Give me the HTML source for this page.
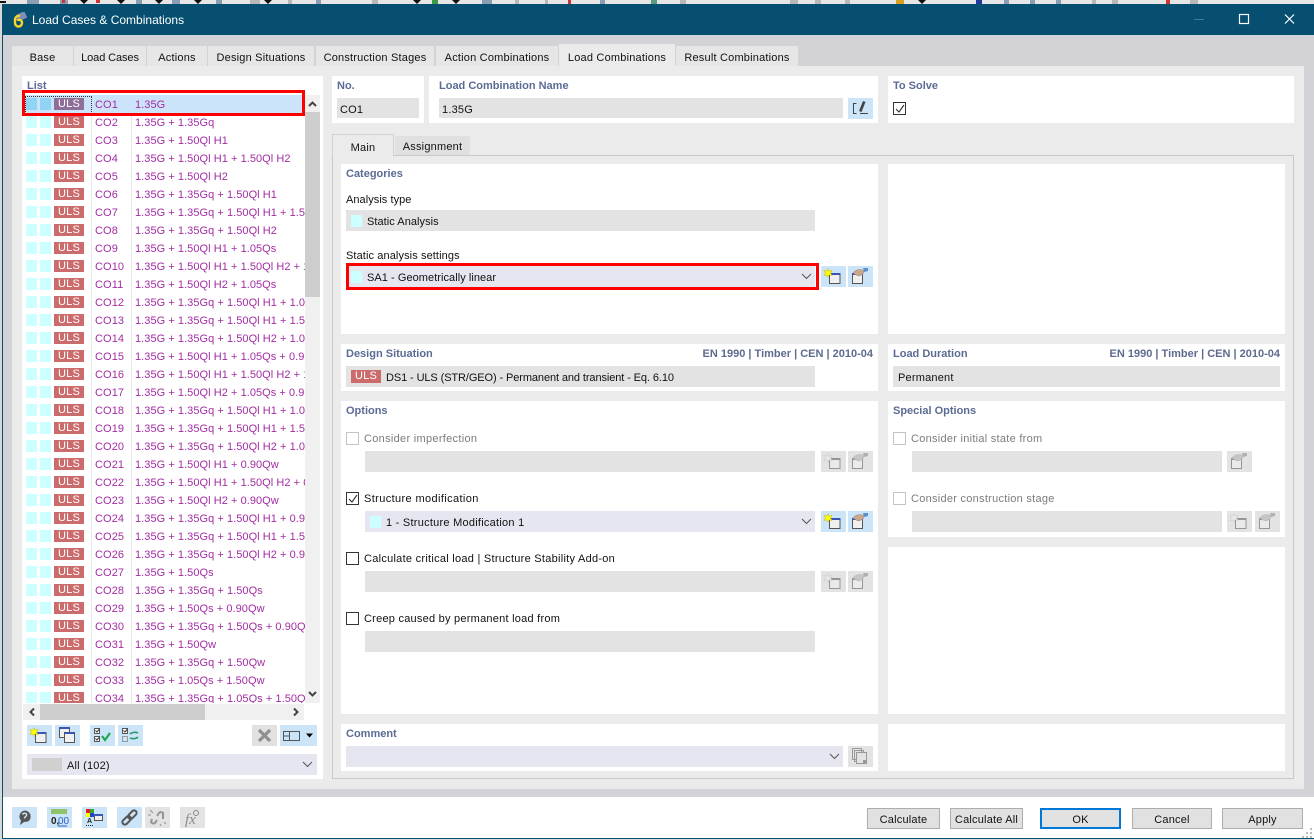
<!DOCTYPE html>
<html><head><meta charset="utf-8">
<style>
html,body{margin:0;padding:0}
body{width:1314px;height:840px;overflow:hidden;position:relative;background:#d8d8d8;font-family:"Liberation Sans",sans-serif;font-size:11px;letter-spacing:.2px;color:#111}
div,span,i,b,em{position:absolute;display:block;font-style:normal;white-space:nowrap}
.w{background:#fff}
.t{color:#5b6b94;font-weight:bold;font-size:11px;letter-spacing:0;margin-top:1px}
.f{background:#e3e3e3;height:21px}
.d{background:#e6e6f0;height:21px}
.l{line-height:16px;margin-top:1px}
.g{color:#7c7c7c}
.tab{top:46px;height:20px;line-height:24px;text-align:center;background:#e6e6e6}
.b{width:25px;height:21px;background:#cce4f7}
.x{background:#e3e3e3}
.b svg{position:absolute;left:0;top:0;width:25px;height:21px}
.x svg{filter:grayscale(1) opacity(.55)}
.cb{width:11px;height:11px;border:1px solid #333;background:#fff;margin-top:1px}
.cb.o{border-color:#c4c4c4}
.cb svg{position:absolute;left:0;top:0}
.chev{width:12px;height:7px}
.r{position:relative;height:18px;width:282px;color:#a32ca3}
.r i{top:3px;width:11px;height:12px;background:#ccffff}
.r i.a{left:4px}.r i.c{left:18px}
.r b{left:32px;top:3px;width:30px;height:12px;line-height:12px;background:#cc6b6b;color:#fff;text-align:center;font-weight:normal}
.r span{left:73px;top:2px;line-height:17px;letter-spacing:.1px}
.r em{left:113px;top:2px;line-height:17px;letter-spacing:.05px}
.btn{top:808px;height:19px;line-height:23px;background:#e1e1e1;border:1px solid #adadad;text-align:center;color:#111}
.red{border:3px solid #f00;box-sizing:border-box}
.sw{background:#ccffff;width:11px;height:12px}
.ul{background:#cc6b6b;color:#fff;text-align:center;line-height:13px;height:13px;width:30px}
</style></head>
<body>
<svg width="0" height="0" style="position:absolute"><defs>
<g id="win"><rect x="8.500" y="7.500" width="10.500" height="10" fill="#f0f0f0" stroke="#555"/><rect x="9" y="7" width="10" height="2" fill="#3a55b8"/></g>
<g id="star"><path d="M7 2.500l1.200 2.700 3-.7-1.800 2.500 1.800 2.500-3-.7L7 11.500 5.800 8.800l-3 .7 1.800-2.500-1.800-2.500 3 .7z" fill="#ff0" stroke="#c8b400" stroke-width=".5"/></g>
<g id="new"><use href="#win"/><use href="#star"/></g>
<g id="hand"><rect x="4.500" y="7.500" width="10" height="10" fill="#f0f0f0" stroke="#555"/><rect x="4" y="7" width="11" height="2" fill="#3a55b8"/><path d="M5 7c2-3 6-4 9-3l2 1-1 3-4 2-3-1z" fill="#c9a88e" stroke="#9a7b65" stroke-width=".5"/><path d="M15 2l5 0 0 3-4 1z" fill="#5b8fd0"/></g>
<g id="chk"><rect x="0.500" y="0.500" width="5" height="5" fill="#fff" stroke="#555"/><path d="M1.500 2.500l1.500 1.500 2.500-3" fill="none" stroke="#333"/></g>
</defs></svg>

<!-- background toolbar strip -->
<div style="left:0;top:0;width:1314px;height:4px;background:#e6e6e6"></div>
<svg style="position:absolute;left:0;top:0" width="1314" height="4">
<rect x="0" y="1" width="6" height="2" fill="#111"/>
<g fill="#8a9fb4"><rect x="27" width="12" height="4"/><rect x="60" width="8" height="4"/><rect x="136" width="6" height="4"/><rect x="172" width="8" height="4"/><rect x="216" width="6" height="4"/><rect x="316" width="5" height="4"/><rect x="482" width="10" height="4"/><rect x="600" width="5" height="4"/><rect x="1004" width="5" height="4"/><rect x="1030" width="5" height="4"/><rect x="1056" width="5" height="4"/></g>
<g fill="#b8b8b8"><rect x="250" width="10" height="4"/><rect x="288" width="4" height="4"/><rect x="372" width="6" height="4"/><rect x="515" width="4" height="4"/><rect x="545" width="3" height="4"/><rect x="680" width="6" height="4"/><rect x="790" width="8" height="4"/><rect x="815" width="6" height="4"/><rect x="845" width="5" height="4"/><rect x="1092" width="4" height="4"/><rect x="1112" width="6" height="4"/><rect x="1190" width="8" height="4"/></g>
<g fill="#c33"><rect x="62" width="3" height="3"/><rect x="96" width="4" height="3"/><rect x="568" width="3" height="4"/><rect x="1166" width="4" height="4"/></g>
<rect x="432" width="6" height="4" fill="#3a9a4a"/><rect x="651" width="6" height="4" fill="#5a9a80"/>
<rect x="896" width="8" height="4" fill="#d6a020"/><rect x="976" width="6" height="4" fill="#223a9a"/>
<g fill="#111"><path d="M80 0h8l-4 4zM117 0h8l-4 4zM155 0h8l-4 4zM194 0h8l-4 4zM264 0h8l-4 4zM413 0h8l-4 4zM452 0h8l-4 4zM918 0h8l-4 4z"/></g>
</svg>

<!-- window -->
<div style="left:2px;top:4px;width:1312px;height:834px;background:#fff"></div>
<div style="left:2px;top:4px;width:1312px;height:31px;background:#064f70"></div>
<div style="left:2px;top:4px;width:1px;height:834px;background:#064f70"></div>
<div style="left:2px;top:838px;width:1312px;height:1px;background:#064f70"></div>
<div style="left:3px;top:35px;width:1311px;height:762px;background:#d3d2d7"></div>
<svg style="position:absolute;left:11px;top:12px" width="16" height="16"><rect x="6" y="1" width="9" height="7" fill="#7d8fb5" transform="rotate(-25 10 4)"/><path d="M9 4a4 4 0 0 0-5 4v3a3.500 3.500 0 0 0 7 0 3 3 0 0 0-5-2.500" fill="none" stroke="#f4d32a" stroke-width="2.400"/></svg>
<span style="left:32px;top:12px;line-height:17px;color:#fff;font-size:12px;letter-spacing:0">Load Cases &amp; Combinations</span>
<svg style="position:absolute;left:1190px;top:12px" width="110" height="16"><path d="M4 7.500h10" stroke="#3d7d98"/><rect x="49.500" y="2.500" width="9" height="9" fill="none" stroke="#fff" stroke-width="1.200"/><path d="M95 2.500l9 9M104 2.500l-9 9" stroke="#fff" stroke-width="1.200"/></svg>

<!-- tabs -->
<div style="left:12px;top:66px;width:1292px;height:723px;background:#ebebeb"></div>
<div class="tab" style="left:12px;width:61px">Base</div>
<div class="tab" style="left:74px;width:72px;letter-spacing:-.1px">Load Cases</div>
<div class="tab" style="left:147px;width:60px">Actions</div>
<div class="tab" style="left:208px;width:106px">Design Situations</div>
<div class="tab" style="left:316px;width:118px">Construction Stages</div>
<div class="tab" style="left:436px;width:122px">Action Combinations</div>
<div class="tab" style="left:559px;top:44px;width:116px;height:22px;line-height:28px;background:#ebebeb">Load Combinations</div>
<div class="tab" style="left:676px;width:122px">Result Combinations</div>

<!-- list panel -->
<div class="w" style="left:22px;top:76px;width:301px;height:703px"></div>
<span class="t" style="left:27px;top:77px;line-height:16px">List</span>
<div style="left:22px;top:95px;width:283px;height:608px;overflow:hidden;background:#fff">
<div style="left:69px;top:0;width:1px;height:608px;background:#e8e8e8"></div>
<div style="left:109px;top:0;width:1px;height:608px;background:#e8e8e8"></div>
<div style="left:0;top:0;width:283px">
<div class="r" style="background:#cce4fa;height:18px"><i class="a" style="background:#8fd4f4"></i><i class="c" style="background:#8fd4f4"></i><b style="background:#8f6f97">ULS</b><span>CO1</span><em>1.35G</em></div>
<div class="r"><i class="a"></i><i class="c"></i><b>ULS</b><span>CO2</span><em>1.35G + 1.35Gq</em></div>
<div class="r"><i class="a"></i><i class="c"></i><b>ULS</b><span>CO3</span><em>1.35G + 1.50Ql H1</em></div>
<div class="r"><i class="a"></i><i class="c"></i><b>ULS</b><span>CO4</span><em>1.35G + 1.50Ql H1 + 1.50Ql H2</em></div>
<div class="r"><i class="a"></i><i class="c"></i><b>ULS</b><span>CO5</span><em>1.35G + 1.50Ql H2</em></div>
<div class="r"><i class="a"></i><i class="c"></i><b>ULS</b><span>CO6</span><em>1.35G + 1.35Gq + 1.50Ql H1</em></div>
<div class="r"><i class="a"></i><i class="c"></i><b>ULS</b><span>CO7</span><em>1.35G + 1.35Gq + 1.50Ql H1 + 1.50Ql H2</em></div>
<div class="r"><i class="a"></i><i class="c"></i><b>ULS</b><span>CO8</span><em>1.35G + 1.35Gq + 1.50Ql H2</em></div>
<div class="r"><i class="a"></i><i class="c"></i><b>ULS</b><span>CO9</span><em>1.35G + 1.50Ql H1 + 1.05Qs</em></div>
<div class="r"><i class="a"></i><i class="c"></i><b>ULS</b><span>CO10</span><em>1.35G + 1.50Ql H1 + 1.50Ql H2 + 1.05Qs</em></div>
<div class="r"><i class="a"></i><i class="c"></i><b>ULS</b><span>CO11</span><em>1.35G + 1.50Ql H2 + 1.05Qs</em></div>
<div class="r"><i class="a"></i><i class="c"></i><b>ULS</b><span>CO12</span><em>1.35G + 1.35Gq + 1.50Ql H1 + 1.05Qs</em></div>
<div class="r"><i class="a"></i><i class="c"></i><b>ULS</b><span>CO13</span><em>1.35G + 1.35Gq + 1.50Ql H1 + 1.50Ql H2</em></div>
<div class="r"><i class="a"></i><i class="c"></i><b>ULS</b><span>CO14</span><em>1.35G + 1.35Gq + 1.50Ql H2 + 1.05Qs</em></div>
<div class="r"><i class="a"></i><i class="c"></i><b>ULS</b><span>CO15</span><em>1.35G + 1.50Ql H1 + 1.05Qs + 0.90Qw</em></div>
<div class="r"><i class="a"></i><i class="c"></i><b>ULS</b><span>CO16</span><em>1.35G + 1.50Ql H1 + 1.50Ql H2 + 1.05Qs</em></div>
<div class="r"><i class="a"></i><i class="c"></i><b>ULS</b><span>CO17</span><em>1.35G + 1.50Ql H2 + 1.05Qs + 0.90Qw</em></div>
<div class="r"><i class="a"></i><i class="c"></i><b>ULS</b><span>CO18</span><em>1.35G + 1.35Gq + 1.50Ql H1 + 1.05Qs</em></div>
<div class="r"><i class="a"></i><i class="c"></i><b>ULS</b><span>CO19</span><em>1.35G + 1.35Gq + 1.50Ql H1 + 1.50Ql H2</em></div>
<div class="r"><i class="a"></i><i class="c"></i><b>ULS</b><span>CO20</span><em>1.35G + 1.35Gq + 1.50Ql H2 + 1.05Qs</em></div>
<div class="r"><i class="a"></i><i class="c"></i><b>ULS</b><span>CO21</span><em>1.35G + 1.50Ql H1 + 0.90Qw</em></div>
<div class="r"><i class="a"></i><i class="c"></i><b>ULS</b><span>CO22</span><em>1.35G + 1.50Ql H1 + 1.50Ql H2 + 0.90Qw</em></div>
<div class="r"><i class="a"></i><i class="c"></i><b>ULS</b><span>CO23</span><em>1.35G + 1.50Ql H2 + 0.90Qw</em></div>
<div class="r"><i class="a"></i><i class="c"></i><b>ULS</b><span>CO24</span><em>1.35G + 1.35Gq + 1.50Ql H1 + 0.90Qw</em></div>
<div class="r"><i class="a"></i><i class="c"></i><b>ULS</b><span>CO25</span><em>1.35G + 1.35Gq + 1.50Ql H1 + 1.50Ql H2</em></div>
<div class="r"><i class="a"></i><i class="c"></i><b>ULS</b><span>CO26</span><em>1.35G + 1.35Gq + 1.50Ql H2 + 0.90Qw</em></div>
<div class="r"><i class="a"></i><i class="c"></i><b>ULS</b><span>CO27</span><em>1.35G + 1.50Qs</em></div>
<div class="r"><i class="a"></i><i class="c"></i><b>ULS</b><span>CO28</span><em>1.35G + 1.35Gq + 1.50Qs</em></div>
<div class="r"><i class="a"></i><i class="c"></i><b>ULS</b><span>CO29</span><em>1.35G + 1.50Qs + 0.90Qw</em></div>
<div class="r"><i class="a"></i><i class="c"></i><b>ULS</b><span>CO30</span><em>1.35G + 1.35Gq + 1.50Qs + 0.90Qw</em></div>
<div class="r"><i class="a"></i><i class="c"></i><b>ULS</b><span>CO31</span><em>1.35G + 1.50Qw</em></div>
<div class="r"><i class="a"></i><i class="c"></i><b>ULS</b><span>CO32</span><em>1.35G + 1.35Gq + 1.50Qw</em></div>
<div class="r"><i class="a"></i><i class="c"></i><b>ULS</b><span>CO33</span><em>1.35G + 1.05Qs + 1.50Qw</em></div>
<div class="r"><i class="a"></i><i class="c"></i><b>ULS</b><span>CO34</span><em>1.35G + 1.35Gq + 1.05Qs + 1.50Qw</em></div>
</div>
</div>
<div style="left:25px;top:96px;width:65px;height:16px;border:1px dotted #333"></div>
<!-- scrollbars -->
<div style="left:305px;top:95px;width:15px;height:608px;background:#f0f0f0"></div>
<div style="left:305px;top:112px;width:15px;height:185px;background:#cdcdcd"></div>
<svg style="position:absolute;left:305px;top:95px" width="15" height="608"><path d="M4 11l3.500-3.500L11 11" fill="none" stroke="#444" stroke-width="2"/><path d="M4 597l3.500 3.500L11 597" fill="none" stroke="#444" stroke-width="2"/></svg>
<div style="left:23px;top:704px;width:281px;height:16px;background:#f0f0f0"></div>
<div style="left:40px;top:704px;width:165px;height:16px;background:#cdcdcd"></div>
<svg style="position:absolute;left:23px;top:704px" width="281" height="16"><path d="M11 4.500L7.500 8l3.500 3.500" fill="none" stroke="#444" stroke-width="2"/><path d="M271 4.500l3.500 3.500-3.500 3.500" fill="none" stroke="#444" stroke-width="2"/></svg>
<!-- list buttons -->
<div class="b" style="left:27px;top:725px"><svg><use href="#new"/></svg></div>
<div class="b" style="left:55px;top:725px"><svg><rect x="4.500" y="2.500" width="10" height="10" fill="#f0f0f0" stroke="#555"/><rect x="5" y="2" width="9" height="2" fill="#3a55b8"/><rect x="9.500" y="7.500" width="10" height="10" fill="#f0f0f0" stroke="#555"/><rect x="10" y="7" width="9" height="2" fill="#3a55b8"/></svg></div>
<div class="b" style="left:90px;top:725px"><svg><use href="#chk" x="4" y="3"/><use href="#chk" x="4" y="11"/><path d="M12 11l3 4 5-7" fill="none" stroke="#1fa84e" stroke-width="2.200"/></svg></div>
<div class="b" style="left:118px;top:725px"><svg><use href="#chk" x="4" y="3"/><rect x="4.500" y="11.500" width="5" height="5" fill="none" stroke="#999"/><path d="M12 9c2-2 6-2 8-1M20 12c-2 2-6 2-8 1" fill="none" stroke="#2a9a6a" stroke-width="1.600"/></svg></div>
<div class="b x" style="left:252px;top:725px;background:#e1e1e1"><svg style="filter:none"><path d="M7 5l11 11M18 5L7 16" stroke="#8f8f8f" stroke-width="3.200"/></svg></div>
<div class="b" style="left:280px;top:725px;width:37px"><svg style="width:37px"><path d="M3.500 6.500h16v9h-16zM9.500 6.500v9M3.500 11h6" fill="none" stroke="#555"/><path d="M26 8.500h7l-3.500 4z" fill="#000"/></svg></div>
<div class="d" style="left:27px;top:754px;width:290px"></div>
<div style="left:32px;top:758px;width:30px;height:13px;background:#d0d0d0"></div>
<span class="l" style="left:67px;top:757px">All (102)</span>
<svg class="chev" style="position:absolute;left:302px;top:761px" width="12" height="7"><path d="M1 1l4.500 4.500L10 1" fill="none" stroke="#555"/></svg>
<div class="red" style="left:22px;top:90px;width:283px;height:26px"></div>

<!-- top right panels -->
<div class="w" style="left:332px;top:76px;width:92px;height:47px"></div>
<span class="t" style="left:337px;top:77px;line-height:16px">No.</span>
<div class="f" style="left:337px;top:98px;width:82px;height:20px"></div>
<span class="l" style="left:340px;top:101px">CO1</span>
<div class="w" style="left:429px;top:76px;width:449px;height:47px"></div>
<span class="t" style="left:439px;top:77px;line-height:16px">Load Combination Name</span>
<div class="f" style="left:439px;top:98px;width:404px;height:20px"></div>
<span class="l" style="left:442px;top:101px">1.35G</span>
<div class="b" style="left:848px;top:98px"><svg><path d="M8.500 5.500h-3v10h3M12 15.500h8" fill="none" stroke="#444"/><path d="M11 13l4-10 2.500 1-4 10z" fill="#444"/></svg></div>
<div class="w" style="left:888px;top:76px;width:406px;height:47px"></div>
<span class="t" style="left:893px;top:77px;line-height:16px">To Solve</span>
<div class="cb" style="left:893px;top:101px"><svg width="11" height="11"><path d="M2 6l3 3 5-7" fill="none" stroke="#333" stroke-width="1.100"/></svg></div>

<!-- subtabs -->
<div style="left:332px;top:155px;width:962px;height:624px;box-sizing:border-box;border:1px solid #c8c8d2"></div>
<div style="left:332px;top:134px;width:62px;height:22px;line-height:26px;text-align:center;background:#ebebeb;border:1px solid #d0d0d8;border-bottom:0;box-sizing:border-box">Main</div>
<div style="left:395px;top:136px;width:75px;height:19px;line-height:22px;text-align:center;background:#e0e0e0">Assignment</div>

<!-- categories -->
<div class="w" style="left:341px;top:164px;width:537px;height:170px"></div>
<div class="w" style="left:888px;top:164px;width:397px;height:170px"></div>
<span class="t" style="left:346px;top:165px;line-height:16px">Categories</span>
<span class="l" style="left:346px;top:191px;letter-spacing:.05px">Analysis type</span>
<div class="f" style="left:346px;top:210px;width:469px"></div>
<div class="sw" style="left:351px;top:215px"></div>
<span class="l" style="left:367px;top:213px;letter-spacing:.05px">Static Analysis</span>
<span class="l" style="left:346px;top:247px;letter-spacing:.1px">Static analysis settings</span>
<div class="d" style="left:346px;top:265px;width:469px;height:23px"></div>
<div class="sw" style="left:351px;top:271px"></div>
<span class="l" style="left:367px;top:269px;letter-spacing:.05px">SA1 - Geometrically linear</span>
<svg class="chev" style="position:absolute;left:801px;top:273px" width="12" height="7"><path d="M1 1l4.500 4.500L10 1" fill="none" stroke="#555"/></svg>
<div class="red" style="left:346px;top:263px;width:473px;height:27px"></div>
<div class="b" style="left:821px;top:266px"><svg><use href="#new"/></svg></div>
<div class="b" style="left:848px;top:266px"><svg><use href="#hand"/></svg></div>

<!-- design situation -->
<div class="w" style="left:341px;top:344px;width:537px;height:47px"></div>
<span class="t" style="left:346px;top:345px;line-height:16px">Design Situation</span>
<span class="t" style="right:441px;top:345px;line-height:16px;color:#5d6b8c">EN 1990 | Timber | CEN | 2010-04</span>
<div class="f" style="left:346px;top:366px;width:469px"></div>
<div class="ul" style="left:351px;top:370px">ULS</div>
<span class="l" style="left:386px;top:369px;letter-spacing:-.1px">DS1 - ULS (STR/GEO) - Permanent and transient - Eq. 6.10</span>
<div class="w" style="left:888px;top:344px;width:397px;height:47px"></div>
<span class="t" style="left:893px;top:345px;line-height:16px">Load Duration</span>
<span class="t" style="right:34px;top:345px;line-height:16px;color:#5d6b8c">EN 1990 | Timber | CEN | 2010-04</span>
<div class="f" style="left:893px;top:366px;width:387px"></div>
<span class="l" style="left:898px;top:369px">Permanent</span>

<!-- options -->
<div class="w" style="left:341px;top:401px;width:537px;height:313px"></div>
<span class="t" style="left:346px;top:402px;line-height:16px">Options</span>
<div class="cb o" style="left:346px;top:431px"></div>
<span class="l g" style="left:364px;top:430px;letter-spacing:.3px">Consider imperfection</span>
<div class="f" style="left:365px;top:451px;width:450px"></div>
<div class="b x" style="left:821px;top:451px"><svg><use href="#new"/></svg></div>
<div class="b x" style="left:848px;top:451px"><svg><use href="#hand"/></svg></div>
<div class="cb" style="left:346px;top:491px"><svg width="11" height="11"><path d="M2 6l3 3 5-7" fill="none" stroke="#333" stroke-width="1.100"/></svg></div>
<span class="l" style="left:364px;top:490px;letter-spacing:.38px">Structure modification</span>
<div class="d" style="left:365px;top:511px;width:450px"></div>
<div class="sw" style="left:370px;top:516px"></div>
<span class="l" style="left:386px;top:514px;letter-spacing:.25px">1 - Structure Modification 1</span>
<svg class="chev" style="position:absolute;left:801px;top:518px" width="12" height="7"><path d="M1 1l4.500 4.500L10 1" fill="none" stroke="#555"/></svg>
<div class="b" style="left:821px;top:511px"><svg><use href="#new"/></svg></div>
<div class="b" style="left:848px;top:511px"><svg><use href="#hand"/></svg></div>
<div class="cb" style="left:346px;top:551px"></div>
<span class="l" style="left:364px;top:550px;letter-spacing:.27px">Calculate critical load | Structure Stability Add-on</span>
<div class="f" style="left:365px;top:571px;width:450px"></div>
<div class="b x" style="left:821px;top:571px"><svg><use href="#new"/></svg></div>
<div class="b x" style="left:848px;top:571px"><svg><use href="#hand"/></svg></div>
<div class="cb" style="left:346px;top:611px"></div>
<span class="l" style="left:364px;top:610px;letter-spacing:.24px">Creep caused by permanent load from</span>
<div class="f" style="left:365px;top:631px;width:450px"></div>

<!-- special options -->
<div class="w" style="left:888px;top:401px;width:397px;height:136px"></div>
<span class="t" style="left:893px;top:402px;line-height:16px">Special Options</span>
<div class="cb o" style="left:893px;top:431px"></div>
<span class="l g" style="left:911px;top:430px;letter-spacing:.27px">Consider initial state from</span>
<div class="f" style="left:912px;top:451px;width:310px"></div>
<div class="b x" style="left:1227px;top:451px"><svg><use href="#hand"/></svg></div>
<div class="cb o" style="left:893px;top:491px"></div>
<span class="l g" style="left:911px;top:490px;letter-spacing:.27px">Consider construction stage</span>
<div class="f" style="left:912px;top:511px;width:310px"></div>
<div class="b x" style="left:1227px;top:511px"><svg><use href="#new"/></svg></div>
<div class="b x" style="left:1255px;top:511px"><svg><use href="#hand"/></svg></div>
<div class="w" style="left:888px;top:547px;width:397px;height:167px"></div>

<!-- comment -->
<div class="w" style="left:341px;top:724px;width:537px;height:47px"></div>
<span class="t" style="left:346px;top:725px;line-height:16px">Comment</span>
<div class="d" style="left:346px;top:746px;width:497px"></div>
<svg class="chev" style="position:absolute;left:829px;top:753px" width="12" height="7"><path d="M1 1l4.500 4.500L10 1" fill="none" stroke="#555"/></svg>
<div class="b x" style="left:848px;top:746px"><svg style="filter:none"><path d="M4.500 2.500h9v11h-9zM6.500 4.500h9v11h-9z" fill="none" stroke="#999"/><rect x="8.500" y="6.500" width="10" height="11" fill="#e3e3e3" stroke="#999"/><rect x="15" y="14" width="3" height="3" fill="#999"/></svg></div>
<div class="w" style="left:888px;top:724px;width:397px;height:47px"></div>

<!-- footer -->
<div class="b" style="left:12px;top:807px"><svg><path d="M13 3.500a6 6 0 0 1 3 11l-4 .5-4 3 1-4.500a6 6 0 0 1 4-10z" fill="#555"/><path d="M10.500 7.500c1-2 5-1.500 4 1-.5 1.200-2 1.200-2 3" fill="none" stroke="#cce4f7" stroke-width="1.500"/></svg></div>
<div class="b" style="left:47px;top:807px"><svg><rect x="4" y="2" width="16" height="5" fill="#8fc46a"/><text x="4" y="17" font-family="Liberation Sans" font-size="10" fill="#222" font-weight="bold" letter-spacing="0">0,</text><text x="11" y="17" font-family="Liberation Sans" font-size="10" fill="#2b5fc8" letter-spacing="0">00</text><path d="M11 19h9" stroke="#2b5fc8"/></svg></div>
<div class="b" style="left:82px;top:807px"><svg><rect x="4" y="2" width="4" height="4" fill="#d22"/><rect x="8" y="2" width="4" height="4" fill="#3a3"/><rect x="4" y="6" width="4" height="4" fill="#ff0"/><rect x="8" y="6" width="4" height="4" fill="#24c"/><rect x="12.500" y="7.500" width="8" height="6" fill="#f0f0f0" stroke="#555"/><rect x="12" y="7" width="9" height="2" fill="#3a55b8"/><text x="5" y="16" font-family="Liberation Sans" font-size="7" font-weight="bold" fill="#222" letter-spacing="0">A</text><path d="M4 18.500h8" stroke="#222" stroke-dasharray="1 1"/></svg></div>
<div class="b" style="left:117px;top:807px"><svg><g transform="rotate(-45 12.500 10.500)" fill="none" stroke="#555" stroke-width="2"><rect x="3.500" y="8" width="10" height="5" rx="2.500"/><rect x="11.500" y="8" width="10" height="5" rx="2.500"/></g></svg></div>
<div class="b x" style="left:145px;top:807px"><svg><path d="M12 9l2-3a2.800 2.800 0 0 1 4 0l0 6M12 13l-2 3a2.800 2.800 0 0 1-4-1l1-3" fill="none" stroke="#555" stroke-width="2"/><path d="M5 3l3 3M3 8h3M19 15l2 2M15 17l1 2" stroke="#555"/></svg></div>
<div class="b x" style="left:180px;top:807px"><svg style="filter:none"><text x="5" y="17" font-family="Liberation Serif" font-style="italic" font-size="15" fill="#8a8a8a" letter-spacing="0">fx</text><circle cx="16" cy="6" r="2.500" fill="none" stroke="#8a8a8a"/></svg></div>
<div class="btn" style="left:867px;width:71px">Calculate</div>
<div class="btn" style="left:950px;width:71px">Calculate All</div>
<div class="btn" style="left:1040px;top:808px;width:77px;height:17px;line-height:20px;border:2px solid #0078d7">OK</div>
<div class="btn" style="left:1132px;width:78px">Cancel</div>
<div class="btn" style="left:1222px;width:79px">Apply</div>
<svg style="position:absolute;left:1302px;top:827px" width="12" height="11"><path d="M8 1h2v2H8zM4 5h2v2H4zM8 5h2v2H8zM0 9h2v2H0zM4 9h2v2H4zM8 9h2v2H8z" fill="#bbb"/></svg>
</body></html>
